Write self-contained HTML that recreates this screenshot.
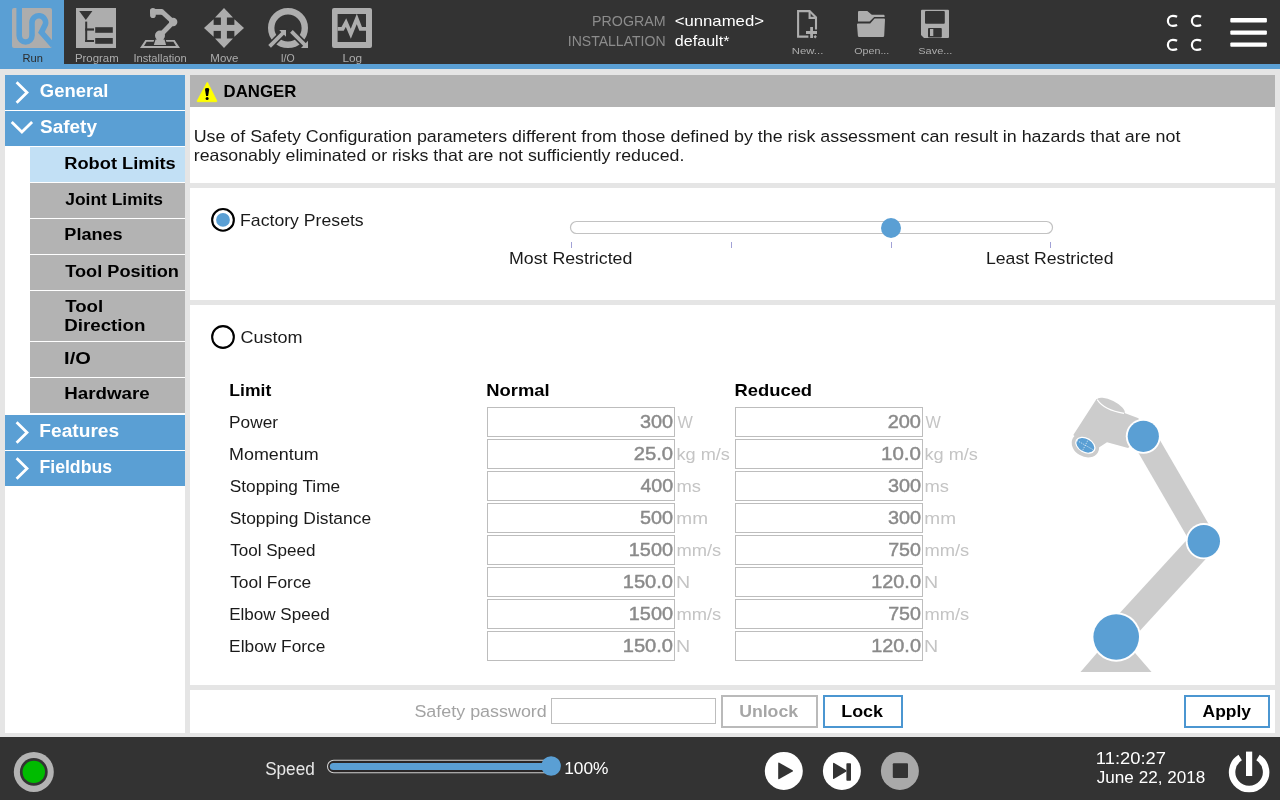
<!DOCTYPE html>
<html><head><meta charset="utf-8"><title>PolyScope Safety</title>
<style>
html,body{margin:0;padding:0;width:1280px;height:800px;overflow:hidden;background:#e5e5e5;}
svg{display:block;will-change:transform;font-family:"Liberation Sans",sans-serif;}
</style></head><body>
<svg width="1280" height="800" viewBox="0 0 1280 800">
<rect x="0" y="0" width="1280" height="800" fill="#e5e5e5"/>
<rect x="0" y="0" width="1280" height="64" fill="#333333"/>
<rect x="0" y="0" width="64" height="64" fill="#5a9fd4"/>
<rect x="0" y="64" width="1280" height="5" fill="#5a9fd4"/>
<rect x="0" y="737" width="1280" height="63" fill="#333333"/>
<clipPath id="urclip"><rect x="12" y="8" width="40" height="40" rx="2"/></clipPath>
<rect x="12" y="8" width="40" height="40" rx="2" fill="#adadad"/>
<path clip-path="url(#urclip)" d="M19.2 4 L19.2 35.6 A6.4 6.4 0 0 0 32 35.6 L32 22.4 A6.8 6.8 0 1 1 45.4 24.2 L41.4 32.4 L57 50" fill="none" stroke="#5a9fd4" stroke-width="5.6" stroke-linejoin="miter"/>
<g transform="translate(64,0)"><rect x="12" y="8" width="40" height="40" fill="#adadad"/><polygon points="15.2,11 28.4,11 21.8,20" fill="#333333"/><rect x="21.2" y="21.6" width="2" height="20.4" fill="#333333"/><rect x="21.2" y="28.4" width="8.8" height="2.2" fill="#333333"/><rect x="21.2" y="40" width="8.8" height="2" fill="#333333"/><rect x="31.2" y="27.2" width="17.6" height="5.6" fill="#333333"/><rect x="31.2" y="38" width="17.6" height="5.8" fill="#333333"/></g>
<g transform="translate(128,0)" fill="#adadad"><path d="M12 48 L52 48 L46.6 40 L17.4 40 Z M16 46 L48 46 L45.4 41.8 L18.6 41.8 Z" fill-rule="evenodd"/><path d="M24.5 45.7 L39.4 45.7 L37.5 38.6 L26.5 38.6 Z" fill="#333333"/><path d="M25.8 45 L38.1 45 L36.5 39.4 L27.5 39.4 Z"/><circle cx="32" cy="35.6" r="5"/><line x1="32" y1="35.6" x2="45.2" y2="22" stroke="#adadad" stroke-width="4.9"/><circle cx="45.2" cy="22" r="4.2"/><line x1="45.2" y1="22" x2="34" y2="11.8" stroke="#adadad" stroke-width="4.9"/><rect x="22" y="8.9" width="13.9" height="5.8" rx="2"/><rect x="22.1" y="7.9" width="5.65" height="10.1" rx="2.8"/></g>
<g transform="translate(192,0)" fill="#adadad"><polygon points="32,8 41,17.6 23,17.6"/><polygon points="32,48 41,38.4 23,38.4"/><polygon points="12,28 21.6,19.2 21.6,36.8"/><polygon points="52,28 42.4,19.2 42.4,36.8"/><rect x="28.9" y="17" width="6" height="22"/><rect x="21" y="24.9" width="22" height="6"/></g>
<g transform="translate(256,0)"><circle cx="32" cy="28" r="16.8" fill="none" stroke="#adadad" stroke-width="6.4"/><line x1="13.6" y1="46.4" x2="28" y2="32" stroke="#333333" stroke-width="6.8"/><line x1="36" y1="32" x2="50" y2="46" stroke="#333333" stroke-width="6.8"/><polygon points="21.8,28.6 31.4,28.6 31.4,38.2" fill="#333333"/><polygon points="53.4,39.4 53.4,49.4 43.6,49.4" fill="#333333"/><line x1="13.6" y1="46.4" x2="28" y2="32" stroke="#adadad" stroke-width="3.8"/><line x1="35.4" y1="31.4" x2="49" y2="45" stroke="#adadad" stroke-width="3.8"/><polygon points="23.2,30 30,30 30,36.8" fill="#adadad"/><polygon points="52,40.8 52,48 45,48" fill="#adadad"/></g>
<g transform="translate(320,0)"><rect x="12" y="8" width="40" height="40" rx="2" fill="#adadad"/><rect x="17.6" y="14" width="28.4" height="28" fill="#333333"/><polyline points="17.6,28.8 22.6,28.8 26,22.6 30.8,33.8 36.8,19 40.6,28.8 46,28.8" fill="none" stroke="#adadad" stroke-width="3.8" stroke-linejoin="miter"/></g>
<text transform="translate(22.51,62.10) scale(1.1124,1)" font-size="10.00" font-weight="normal" fill="#2b2b2b">Run</text>
<text transform="translate(74.89,62.10) scale(1.1436,1)" font-size="10.00" font-weight="normal" fill="#adadad">Program</text>
<text transform="translate(133.40,62.10) scale(1.1157,1)" font-size="10.00" font-weight="normal" fill="#adadad">Installation</text>
<text transform="translate(210.33,62.10) scale(1.1530,1)" font-size="10.00" font-weight="normal" fill="#adadad">Move</text>
<text transform="translate(280.65,62.10) scale(1.0544,1)" font-size="10.00" font-weight="normal" fill="#adadad">I/O</text>
<text transform="translate(342.45,62.10) scale(1.1842,1)" font-size="10.00" font-weight="normal" fill="#adadad">Log</text>
<text transform="translate(592.06,26.10) scale(0.9830,1)" font-size="14.49" font-weight="normal" fill="#8c8c8c">PROGRAM</text>
<text transform="translate(567.73,45.90) scale(0.9514,1)" font-size="14.78" font-weight="normal" fill="#8c8c8c">INSTALLATION</text>
<text transform="translate(674.66,26.10) scale(1.1335,1)" font-size="14.78" font-weight="normal" fill="#ffffff">&lt;unnamed&gt;</text>
<text transform="translate(674.86,45.90) scale(1.0896,1)" font-size="14.78" font-weight="normal" fill="#ffffff">default*</text>
<g fill="none" stroke="#adadad" stroke-width="2.1"><path d="M808.4 36.6 L798.1 36.6 L798.1 11.1 L809.6 11.1 L816 17.5 L816 29.5"/><path d="M809.6 11.1 L809.6 17.9 L816 17.9"/></g>
<rect x="810.2" y="27" width="2.8" height="11" fill="#adadad"/>
<rect x="806" y="31" width="11" height="3" fill="#adadad"/>
<rect x="814" y="35.6" width="2.4" height="2.4" fill="#adadad" transform="rotate(45 815.2 36.8)"/>
<path d="M859 11 L867.3 11 L871.8 14.8 L883.6 14.8 Q884.6 14.8 884.6 16 L884.6 17 L874.2 17 L869.6 21.4 L858 21.4 L858 12 Q858 11 859 11 Z" fill="#adadad"/>
<path d="M857.2 23.4 L870.2 23.4 L874.6 18.4 L884 18.4 Q885 18.4 885 19.6 L884.2 35.8 Q884.1 37 883 37 L859.2 37 Q858 37 857.9 35.8 L857 24.6 Q857 23.4 858 23.4 Z" fill="#adadad"/>
<path d="M922 9.8 L948 9.8 Q949 9.8 949 10.8 L949 37 Q949 38 948 38 L924 38 L921 35 L921 10.8 Q921 9.8 922 9.8 Z" fill="#adadad"/>
<rect x="925" y="11" width="19.8" height="12.8" rx="1" fill="#333333"/>
<rect x="928" y="28" width="13.8" height="9.5" rx="1" fill="#333333"/>
<rect x="930" y="29" width="3.3" height="7" fill="#adadad"/>
<text transform="translate(791.79,54.00) scale(1.1702,1)" font-size="9.71" font-weight="normal" fill="#adadad">New...</text>
<text transform="translate(854.32,54.00) scale(1.0987,1)" font-size="9.71" font-weight="normal" fill="#adadad">Open...</text>
<text transform="translate(918.31,54.00) scale(1.1285,1)" font-size="9.71" font-weight="normal" fill="#adadad">Save...</text>
<path d="M1177.1 16.8 Q1175.3 15.9 1172.9 15.9 A5 5 0 0 0 1172.9 25.9 Q1175.3 25.9 1177.1 25.0" fill="none" stroke="#ffffff" stroke-width="2.2"/>
<path d="M1201.1 16.8 Q1199.3 15.9 1196.9 15.9 A5 5 0 0 0 1196.9 25.9 Q1199.3 25.9 1201.1 25.0" fill="none" stroke="#ffffff" stroke-width="2.2"/>
<path d="M1177.1 40.8 Q1175.3 39.9 1172.9 39.9 A5 5 0 0 0 1172.9 49.9 Q1175.3 49.9 1177.1 49.0" fill="none" stroke="#ffffff" stroke-width="2.2"/>
<path d="M1201.1 40.8 Q1199.3 39.9 1196.9 39.9 A5 5 0 0 0 1196.9 49.9 Q1199.3 49.9 1201.1 49.0" fill="none" stroke="#ffffff" stroke-width="2.2"/>
<rect x="1230.3" y="18.1" width="36.6" height="4.3" rx="1" fill="#ffffff"/>
<rect x="1230.3" y="30.5" width="36.6" height="4.3" rx="1" fill="#ffffff"/>
<rect x="1230.3" y="42.5" width="36.6" height="4.3" rx="1" fill="#ffffff"/>
<rect x="5" y="75" width="180" height="658" fill="#ffffff"/>
<rect x="5" y="75" width="180" height="35" fill="#5a9fd4"/>
<rect x="5" y="111" width="180" height="35" fill="#5a9fd4"/>
<rect x="30" y="147" width="155" height="35" fill="#c2e0f5"/>
<rect x="30" y="183" width="155" height="35" fill="#b3b3b3"/>
<rect x="30" y="219" width="155" height="35" fill="#b3b3b3"/>
<rect x="30" y="255" width="155" height="35" fill="#b3b3b3"/>
<rect x="30" y="291" width="155" height="50" fill="#b3b3b3"/>
<rect x="30" y="342" width="155" height="35" fill="#b3b3b3"/>
<rect x="30" y="378" width="155" height="35" fill="#b3b3b3"/>
<rect x="5" y="415" width="180" height="35" fill="#5a9fd4"/>
<rect x="5" y="451" width="180" height="35" fill="#5a9fd4"/>
<polyline points="16.6,82.3 27,92.5 16.6,102.7" fill="none" stroke="#ffffff" stroke-width="2.8"/>
<polyline points="16.6,422.3 27,432.5 16.6,442.7" fill="none" stroke="#ffffff" stroke-width="2.8"/>
<polyline points="16.6,458.3 27,468.5 16.6,478.7" fill="none" stroke="#ffffff" stroke-width="2.8"/>
<polyline points="11.7,121.9 21.9,132.1 32.1,121.9" fill="none" stroke="#ffffff" stroke-width="2.8"/>
<text transform="translate(39.86,97.00) scale(1.0420,1)" font-size="17.68" font-weight="bold" fill="#ffffff">General</text>
<text transform="translate(40.03,132.70) scale(1.0739,1)" font-size="17.68" font-weight="bold" fill="#ffffff">Safety</text>
<text transform="translate(39.35,437.00) scale(1.0838,1)" font-size="17.68" font-weight="bold" fill="#ffffff">Features</text>
<text transform="translate(39.45,472.70) scale(0.9998,1)" font-size="17.68" font-weight="bold" fill="#ffffff">Fieldbus</text>
<text transform="translate(64.31,168.90) scale(1.1047,1)" font-size="16.52" font-weight="bold" fill="#000000">Robot Limits</text>
<text transform="translate(65.24,204.80) scale(1.0547,1)" font-size="16.52" font-weight="bold" fill="#000000">Joint Limits</text>
<text transform="translate(64.32,240.40) scale(1.0961,1)" font-size="16.52" font-weight="bold" fill="#000000">Planes</text>
<text transform="translate(65.22,276.60) scale(1.1010,1)" font-size="16.52" font-weight="bold" fill="#000000">Tool Position</text>
<text transform="translate(65.21,312.00) scale(1.1302,1)" font-size="16.52" font-weight="bold" fill="#000000">Tool</text>
<text transform="translate(64.18,331.00) scale(1.1358,1)" font-size="16.52" font-weight="bold" fill="#000000">Direction</text>
<text transform="translate(64.09,364.00) scale(1.2155,1)" font-size="16.52" font-weight="bold" fill="#000000">I/O</text>
<text transform="translate(64.18,399.40) scale(1.1358,1)" font-size="16.52" font-weight="bold" fill="#000000">Hardware</text>
<rect x="190" y="75" width="1085" height="32" fill="#b3b3b3"/>
<rect x="190" y="107" width="1085" height="76" fill="#ffffff"/>
<path d="M207 82.6 Q207.2 82 207.6 82.6 L216.8 100.8 Q217.2 101.7 216.2 101.7 L197.8 101.7 Q196.8 101.7 197.2 100.8 Z" fill="#ffff00" stroke="#ffff00" stroke-width="0.8" stroke-linejoin="round"/>
<path d="M205 89.4 Q205 88 207.1 88 Q209.2 88 209.2 89.4 L208.1 96 L206.1 96 Z" fill="#000"/>
<circle cx="207.1" cy="98.4" r="1.5" fill="#000"/>
<text transform="translate(223.61,96.75) scale(0.9644,1)" font-size="17.39" font-weight="bold" fill="#000000">DANGER</text>
<text transform="translate(193.66,141.70) scale(1.0711,1)" font-size="16.67" font-weight="normal" fill="#1a1a1a">Use of Safety Configuration parameters different from those defined by the risk assessment can result in hazards that are not</text>
<text transform="translate(193.85,160.60) scale(1.0645,1)" font-size="16.67" font-weight="normal" fill="#1a1a1a">reasonably eliminated or risks that are not sufficiently reduced.</text>
<rect x="190" y="188" width="1085" height="112" fill="#ffffff"/>
<circle cx="223" cy="219.9" r="10.85" fill="#fff" stroke="#000" stroke-width="2.1"/>
<circle cx="223" cy="219.9" r="6.9" fill="#5a9fd4"/>
<text transform="translate(240.09,226.00) scale(1.0155,1)" font-size="17.39" font-weight="normal" fill="#1a1a1a">Factory Presets</text>
<rect x="570.5" y="221.5" width="482" height="12" rx="6" fill="#fff" stroke="#c2c2c2" stroke-width="1.2"/>
<rect x="571" y="242" width="1" height="6" fill="#a2a2d6"/>
<rect x="731" y="242" width="1" height="6" fill="#a2a2d6"/>
<rect x="891" y="242" width="1" height="6" fill="#a2a2d6"/>
<rect x="1050" y="242" width="1" height="6" fill="#a2a2d6"/>
<circle cx="891" cy="228" r="10" fill="#5a9fd4"/>
<text transform="translate(508.98,263.80) scale(1.0485,1)" font-size="16.96" font-weight="normal" fill="#1a1a1a">Most Restricted</text>
<text transform="translate(985.99,263.80) scale(1.0412,1)" font-size="16.96" font-weight="normal" fill="#1a1a1a">Least Restricted</text>
<rect x="190" y="305" width="1085" height="380" fill="#ffffff"/>
<circle cx="223" cy="337" r="10.85" fill="#fff" stroke="#000" stroke-width="2.1"/>
<text transform="translate(240.60,343.00) scale(1.0360,1)" font-size="17.39" font-weight="normal" fill="#1a1a1a">Custom</text>
<text transform="translate(229.36,396.00) scale(1.0081,1)" font-size="17.39" font-weight="bold" fill="#000000">Limit</text>
<text transform="translate(486.31,396.10) scale(1.0563,1)" font-size="17.39" font-weight="bold" fill="#000000">Normal</text>
<text transform="translate(734.50,395.60) scale(1.0572,1)" font-size="17.39" font-weight="bold" fill="#000000">Reduced</text>
<text transform="translate(229.12,428.00) scale(1.0355,1)" font-size="16.67" font-weight="normal" fill="#1a1a1a">Power</text>
<rect x="487.5" y="407.5" width="187" height="29" fill="#fff" stroke="#bdbdbd" stroke-width="1"/>
<rect x="735.5" y="407.5" width="187" height="29" fill="#fff" stroke="#bdbdbd" stroke-width="1"/>
<text transform="translate(640.01,428.00) scale(1.0849,1)" font-size="18.26" font-weight="normal" fill="#8a8a8a" stroke="#8a8a8a" stroke-width="0.45">300</text>
<text transform="translate(887.70,428.00) scale(1.0918,1)" font-size="18.26" font-weight="normal" fill="#8a8a8a" stroke="#8a8a8a" stroke-width="0.45">200</text>
<text transform="translate(677.52,428.00) scale(0.9754,1)" font-size="16.67" font-weight="normal" fill="#c4c4c4">W</text>
<text transform="translate(925.52,428.00) scale(0.9754,1)" font-size="16.67" font-weight="normal" fill="#c4c4c4">W</text>
<text transform="translate(229.07,460.00) scale(1.0741,1)" font-size="16.67" font-weight="normal" fill="#1a1a1a">Momentum</text>
<rect x="487.5" y="439.5" width="187" height="29" fill="#fff" stroke="#bdbdbd" stroke-width="1"/>
<rect x="735.5" y="439.5" width="187" height="29" fill="#fff" stroke="#bdbdbd" stroke-width="1"/>
<text transform="translate(633.69,460.00) scale(1.1070,1)" font-size="18.26" font-weight="normal" fill="#8a8a8a" stroke="#8a8a8a" stroke-width="0.45">25.0</text>
<text transform="translate(881.06,460.00) scale(1.1221,1)" font-size="18.26" font-weight="normal" fill="#8a8a8a" stroke="#8a8a8a" stroke-width="0.45">10.0</text>
<text transform="translate(676.42,460.00) scale(1.0903,1)" font-size="16.67" font-weight="normal" fill="#c4c4c4">kg m/s</text>
<text transform="translate(924.42,460.00) scale(1.0903,1)" font-size="16.67" font-weight="normal" fill="#c4c4c4">kg m/s</text>
<text transform="translate(229.72,492.00) scale(1.0371,1)" font-size="16.67" font-weight="normal" fill="#1a1a1a">Stopping Time</text>
<rect x="487.5" y="471.5" width="187" height="29" fill="#fff" stroke="#bdbdbd" stroke-width="1"/>
<rect x="735.5" y="471.5" width="187" height="29" fill="#fff" stroke="#bdbdbd" stroke-width="1"/>
<text transform="translate(640.41,492.00) scale(1.0714,1)" font-size="18.26" font-weight="normal" fill="#8a8a8a" stroke="#8a8a8a" stroke-width="0.45">400</text>
<text transform="translate(887.91,492.00) scale(1.0849,1)" font-size="18.26" font-weight="normal" fill="#8a8a8a" stroke="#8a8a8a" stroke-width="0.45">300</text>
<text transform="translate(676.41,492.00) scale(1.1028,1)" font-size="16.67" font-weight="normal" fill="#c4c4c4">ms</text>
<text transform="translate(924.41,492.00) scale(1.1028,1)" font-size="16.67" font-weight="normal" fill="#c4c4c4">ms</text>
<text transform="translate(229.72,524.00) scale(1.0452,1)" font-size="16.67" font-weight="normal" fill="#1a1a1a">Stopping Distance</text>
<rect x="487.5" y="503.5" width="187" height="29" fill="#fff" stroke="#bdbdbd" stroke-width="1"/>
<rect x="735.5" y="503.5" width="187" height="29" fill="#fff" stroke="#bdbdbd" stroke-width="1"/>
<text transform="translate(640.01,524.00) scale(1.0849,1)" font-size="18.26" font-weight="normal" fill="#8a8a8a" stroke="#8a8a8a" stroke-width="0.45">500</text>
<text transform="translate(887.91,524.00) scale(1.0849,1)" font-size="18.26" font-weight="normal" fill="#8a8a8a" stroke="#8a8a8a" stroke-width="0.45">300</text>
<text transform="translate(676.36,524.00) scale(1.1416,1)" font-size="16.67" font-weight="normal" fill="#c4c4c4">mm</text>
<text transform="translate(924.36,524.00) scale(1.1416,1)" font-size="16.67" font-weight="normal" fill="#c4c4c4">mm</text>
<text transform="translate(230.16,556.00) scale(1.0244,1)" font-size="16.67" font-weight="normal" fill="#1a1a1a">Tool Speed</text>
<rect x="487.5" y="535.5" width="187" height="29" fill="#fff" stroke="#bdbdbd" stroke-width="1"/>
<rect x="735.5" y="535.5" width="187" height="29" fill="#fff" stroke="#bdbdbd" stroke-width="1"/>
<text transform="translate(628.81,556.00) scale(1.0875,1)" font-size="18.26" font-weight="normal" fill="#8a8a8a" stroke="#8a8a8a" stroke-width="0.45">1500</text>
<text transform="translate(888.22,556.00) scale(1.0744,1)" font-size="18.26" font-weight="normal" fill="#8a8a8a" stroke="#8a8a8a" stroke-width="0.45">750</text>
<text transform="translate(676.41,556.00) scale(1.1002,1)" font-size="16.67" font-weight="normal" fill="#c4c4c4">mm/s</text>
<text transform="translate(924.41,556.00) scale(1.1002,1)" font-size="16.67" font-weight="normal" fill="#c4c4c4">mm/s</text>
<text transform="translate(230.15,588.00) scale(1.0435,1)" font-size="16.67" font-weight="normal" fill="#1a1a1a">Tool Force</text>
<rect x="487.5" y="567.5" width="187" height="29" fill="#fff" stroke="#bdbdbd" stroke-width="1"/>
<rect x="735.5" y="567.5" width="187" height="29" fill="#fff" stroke="#bdbdbd" stroke-width="1"/>
<text transform="translate(622.79,588.00) scale(1.0998,1)" font-size="18.26" font-weight="normal" fill="#8a8a8a" stroke="#8a8a8a" stroke-width="0.45">150.0</text>
<text transform="translate(871.21,588.00) scale(1.0884,1)" font-size="18.26" font-weight="normal" fill="#8a8a8a" stroke="#8a8a8a" stroke-width="0.45">120.0</text>
<text transform="translate(676.03,588.00) scale(1.1786,1)" font-size="16.67" font-weight="normal" fill="#c4c4c4">N</text>
<text transform="translate(924.03,588.00) scale(1.1786,1)" font-size="16.67" font-weight="normal" fill="#c4c4c4">N</text>
<text transform="translate(229.14,620.00) scale(1.0235,1)" font-size="16.67" font-weight="normal" fill="#1a1a1a">Elbow Speed</text>
<rect x="487.5" y="599.5" width="187" height="29" fill="#fff" stroke="#bdbdbd" stroke-width="1"/>
<rect x="735.5" y="599.5" width="187" height="29" fill="#fff" stroke="#bdbdbd" stroke-width="1"/>
<text transform="translate(628.81,620.00) scale(1.0875,1)" font-size="18.26" font-weight="normal" fill="#8a8a8a" stroke="#8a8a8a" stroke-width="0.45">1500</text>
<text transform="translate(888.22,620.00) scale(1.0744,1)" font-size="18.26" font-weight="normal" fill="#8a8a8a" stroke="#8a8a8a" stroke-width="0.45">750</text>
<text transform="translate(676.41,620.00) scale(1.1002,1)" font-size="16.67" font-weight="normal" fill="#c4c4c4">mm/s</text>
<text transform="translate(924.41,620.00) scale(1.1002,1)" font-size="16.67" font-weight="normal" fill="#c4c4c4">mm/s</text>
<text transform="translate(229.12,652.00) scale(1.0387,1)" font-size="16.67" font-weight="normal" fill="#1a1a1a">Elbow Force</text>
<rect x="487.5" y="631.5" width="187" height="29" fill="#fff" stroke="#bdbdbd" stroke-width="1"/>
<rect x="735.5" y="631.5" width="187" height="29" fill="#fff" stroke="#bdbdbd" stroke-width="1"/>
<text transform="translate(622.79,652.00) scale(1.0998,1)" font-size="18.26" font-weight="normal" fill="#8a8a8a" stroke="#8a8a8a" stroke-width="0.45">150.0</text>
<text transform="translate(871.21,652.00) scale(1.0884,1)" font-size="18.26" font-weight="normal" fill="#8a8a8a" stroke="#8a8a8a" stroke-width="0.45">120.0</text>
<text transform="translate(676.03,652.00) scale(1.1786,1)" font-size="16.67" font-weight="normal" fill="#c4c4c4">N</text>
<text transform="translate(924.03,652.00) scale(1.1786,1)" font-size="16.67" font-weight="normal" fill="#c4c4c4">N</text>
<polygon points="1080.5,672 1151.5,672 1116,631" fill="#cccccc"/>
<line x1="1116" y1="637" x2="1204" y2="541" stroke="#cccccc" stroke-width="27"/>
<line x1="1204" y1="541" x2="1143.4" y2="436.4" stroke="#cccccc" stroke-width="25"/>
<polygon points="1096.5,399 1073.3,435 1092,452 1107,442.3 1128,448 1143,436 1138.5,418.2 1124.5,413" fill="#cccccc"/>
<ellipse cx="1110.6" cy="406.4" rx="15.6" ry="5.9" transform="rotate(26.6 1110.6 406.4)" fill="#cccccc"/>
<path d="M1097.2 399.6 Q1104 410 1124 413.4" fill="none" stroke="#fff" stroke-width="1.1"/>
<ellipse cx="1085.4" cy="445.3" rx="14.4" ry="11.3" transform="rotate(30 1085.4 445.3)" fill="#cccccc"/>
<ellipse cx="1085.4" cy="445.2" rx="10.9" ry="7.5" transform="rotate(30 1085.4 445.2)" fill="#fff"/>
<ellipse cx="1085.3" cy="445.3" rx="9.6" ry="6.4" transform="rotate(30 1085.3 445.3)" fill="#5a9fd4"/>
<g stroke="#fff" stroke-width="0.7" stroke-dasharray="1.2 1.2"><line x1="1077" y1="440.5" x2="1093.6" y2="450"/><line x1="1088.8" y1="438.6" x2="1081.8" y2="452"/></g>
<circle cx="1143.3" cy="436.3" r="17.5" fill="#fff"/>
<circle cx="1143.3" cy="436.3" r="15.6" fill="#5a9fd4"/>
<circle cx="1203.8" cy="541.2" r="18.099999999999998" fill="#fff"/>
<circle cx="1203.8" cy="541.2" r="16.2" fill="#5a9fd4"/>
<circle cx="1116.2" cy="637" r="24.7" fill="#fff"/>
<circle cx="1116.2" cy="637" r="22.8" fill="#5a9fd4"/>
<rect x="190" y="690" width="1085" height="43" fill="#ffffff"/>
<text transform="translate(414.39,716.70) scale(1.0386,1)" font-size="17.25" font-weight="normal" fill="#a3a3a3">Safety password</text>
<rect x="551.5" y="698.5" width="164" height="25" fill="#fff" stroke="#bdbdbd" stroke-width="1"/>
<rect x="722" y="696" width="95" height="31" fill="#fff" stroke="#bababa" stroke-width="2"/>
<text transform="translate(739.14,716.70) scale(1.0251,1)" font-size="17.25" font-weight="bold" fill="#a6a6a6">Unlock</text>
<rect x="824" y="696" width="78" height="31" fill="#fff" stroke="#4b96d1" stroke-width="2"/>
<text transform="translate(841.24,716.70) scale(1.0371,1)" font-size="17.25" font-weight="bold" fill="#000000">Lock</text>
<rect x="1185" y="696" width="84" height="31" fill="#fff" stroke="#4b96d1" stroke-width="2"/>
<text transform="translate(1202.56,717.00) scale(1.0097,1)" font-size="17.25" font-weight="bold" fill="#000000">Apply</text>
<circle cx="33.8" cy="771.9" r="20" fill="#b3b3b3"/>
<circle cx="33.8" cy="771.9" r="13.9" fill="#333333"/>
<circle cx="33.8" cy="771.9" r="11.2" fill="#00bb00"/>
<text transform="translate(265.13,774.50) scale(0.9704,1)" font-size="17.68" font-weight="normal" fill="#e8e8e8">Speed</text>
<rect x="327.5" y="760.3" width="232" height="12.4" rx="6.2" fill="#2a2626" stroke="#cfcfcf" stroke-width="1.1"/>
<rect x="329.8" y="762.9" width="222" height="7.2" rx="3.6" fill="#5a9fd4"/>
<circle cx="551.1" cy="766" r="9.8" fill="#5a9fd4"/>
<text transform="translate(564.20,773.90) scale(1.0058,1)" font-size="17.25" font-weight="normal" fill="#ffffff">100%</text>
<circle cx="783.8" cy="770.9" r="19" fill="#fff"/>
<path d="M778.2 763.4 Q778.2 762.2 779.3 762.8 L792.6 770.2 Q793.5 770.9 792.6 771.5 L779.3 779 Q778.2 779.6 778.2 778.4 Z" fill="#333333"/>
<circle cx="841.9" cy="770.9" r="19" fill="#fff"/>
<path d="M833 763.6 Q833 762.4 834.1 763 L846.4 770.2 L846.4 771.6 L834.1 778.8 Q833 779.4 833 778.2 Z" fill="#333333"/>
<rect x="846.4" y="763.2" width="4.6" height="17.6" rx="0.8" fill="#333333"/>
<circle cx="899.9" cy="770.9" r="19" fill="#a9a9a9"/>
<rect x="892.8" y="763.2" width="15.2" height="14.8" rx="1" fill="#333333"/>
<text transform="translate(1095.82,763.90) scale(1.0836,1)" font-size="16.96" font-weight="normal" fill="#ffffff">11:20:27</text>
<text transform="translate(1096.74,782.70) scale(1.0096,1)" font-size="16.96" font-weight="normal" fill="#ffffff">June 22, 2018</text>
<path d="M1240.2 757.6 A17 17 0 1 0 1258 757.6" fill="none" stroke="#fff" stroke-width="6.5"/>
<rect x="1246" y="751.6" width="6.2" height="24.4" fill="#fff"/>
</svg>
</body></html>
